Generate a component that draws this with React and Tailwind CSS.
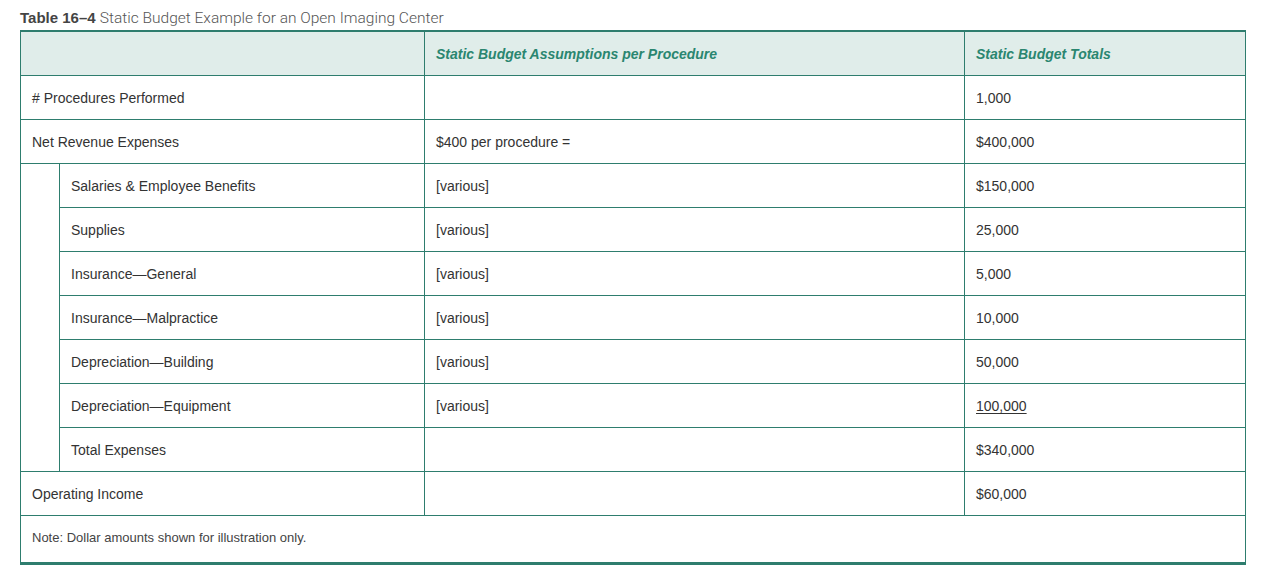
import React from 'react';

const rows = [
  { label: '# Procedures Performed', assumption: '', total: '1,000' },
  { label: 'Net Revenue Expenses', assumption: '$400 per procedure =', total: '$400,000' },
];

const subRows = [
  { label: 'Salaries & Employee Benefits', assumption: '[various]', total: '$150,000' },
  { label: 'Supplies', assumption: '[various]', total: '25,000' },
  { label: 'Insurance—General', assumption: '[various]', total: '5,000' },
  { label: 'Insurance—Malpractice', assumption: '[various]', total: '10,000' },
  { label: 'Depreciation—Building', assumption: '[various]', total: '50,000' },
  { label: 'Depreciation—Equipment', assumption: '[various]', total: '100,000', underline: true },
  { label: 'Total Expenses', assumption: '', total: '$340,000' },
];

const cell = 'border border-[#2e7d6e] pl-[11px] pr-3 pt-[2px] align-middle';

export default function App() {
  return (
    <div className="bg-white min-h-[570px] pl-5 pt-[8px] pr-5 text-[#333]" style={{ fontFamily: '"Liberation Sans", Arial, sans-serif' }}>
      {/* Caption */}
      <p className="text-[15px] leading-5 text-[#555] mb-[2px]">
        <span className="font-bold text-[#444]">Table 16–4</span>{' '}
        <span className="font-light text-[15.5px]" style={{ fontFamily: 'Roboto, "Liberation Sans", sans-serif' }}>
          Static Budget Example for an Open Imaging Center
        </span>
      </p>

      <table className="w-[1225px] border-collapse border-t-2 border-b-[3px] border-x border-[#2e7d6e] text-sm table-fixed">
        <colgroup>
          <col className="w-[39px]" />
          <col className="w-[365px]" />
          <col className="w-[540px]" />
          <col className="w-[281px]" />
        </colgroup>
        <thead>
          <tr className="h-[44px] bg-[#e0edea]">
            <th colSpan={2} className={`${cell} border-t-2`}></th>
            <th className={`${cell} border-t-2 text-left font-bold italic text-[#2a8670]`}>
              Static Budget Assumptions per Procedure
            </th>
            <th className={`${cell} border-t-2 text-left font-bold italic text-[#2a8670]`}>
              Static Budget Totals
            </th>
          </tr>
        </thead>
        <tbody>
          {rows.map((r) => (
            <tr key={r.label} className="h-[44px]">
              <td colSpan={2} className={cell}>{r.label}</td>
              <td className={cell}>{r.assumption}</td>
              <td className={cell}>{r.total}</td>
            </tr>
          ))}
          {subRows.map((r, i) => (
            <tr key={r.label} className="h-[44px]">
              {i === 0 && <td rowSpan={subRows.length} className={cell}></td>}
              <td className={cell}>{r.label}</td>
              <td className={cell}>{r.assumption}</td>
              <td className={cell}>
                <span className={r.underline ? 'underline underline-offset-2' : ''}>{r.total}</span>
              </td>
            </tr>
          ))}
          <tr className="h-[44px]">
            <td colSpan={2} className={cell}>Operating Income</td>
            <td className={cell}></td>
            <td className={cell}>$60,000</td>
          </tr>
          <tr className="h-[48px]">
            <td colSpan={4} className={`${cell} border-b-[3px] text-[13px] text-[#444] !pt-0`}>
              Note: Dollar amounts shown for illustration only.
            </td>
          </tr>
        </tbody>
      </table>
    </div>
  );
}
